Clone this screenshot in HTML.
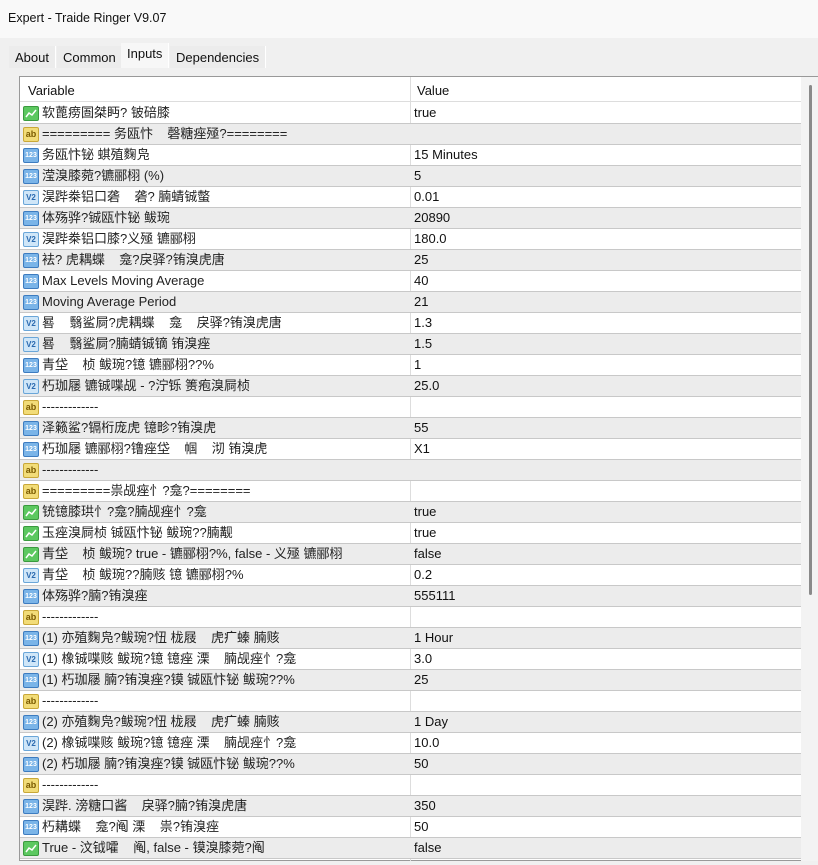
<!DOCTYPE html><html><head><meta charset="utf-8"><style>
*{margin:0;padding:0;box-sizing:border-box}
body{width:818px;height:865px;background:#f0f0f0;font-family:"Liberation Sans","Noto Sans CJK SC",sans-serif;font-size:13px;color:#111;overflow:hidden;position:relative}
.title{position:absolute;left:0;top:0;width:818px;height:38px;background:#f9f9f9;padding:11px 0 0 8px;font-size:12.5px}
.tabs{position:absolute;top:44px;left:9px;height:24px}
.tab{position:absolute;top:2px;height:22px;padding:4px 6px;background:#ececec;border-right:1px solid #fff;font-size:13px}
.tab.act{top:-1px;height:25px;background:#f7f7f7;padding-top:3px}
.box{position:absolute;left:19px;top:76px;width:799px;height:785px;background:#fff;border:1px solid #999;border-right:none}
.hdr{position:absolute;left:0;top:0;width:781px;height:25px;border-bottom:1px solid #ddd}
.hdr span{position:absolute;top:6px;font-size:13px}
.vl{position:absolute;left:390px;top:0;width:1px;height:784px;background:#ddd}
.row{position:absolute;left:0;width:781px;height:21px;border-bottom:1px solid #c8c8c8;line-height:16px}
.row.g{background:#ececec}
.ic{position:absolute;left:3px;top:3px;width:16px;height:15px;border-radius:2px;font-size:8px;font-weight:bold;text-align:center;line-height:13px}
.b{background:#5cc860;border:1px solid #3a9a3e}
.a{background:#f2dc78;border:1px solid #c9a838;color:#7a5a00;font-size:9px}
.n{background:#7ab4e8;border:1px solid #3d7cc0;color:#fff;font-size:7px}
.v{background:#cfe6f8;border:1px solid #6aa6d8;color:#2a6ab0;font-size:8px}
.t{position:absolute;left:22px;top:2px;height:16px;white-space:pre;overflow:hidden;color:#222}
.val{position:absolute;left:394px;top:2px;height:16px}
.sb{position:absolute;left:781px;top:0;width:18px;height:784px;background:#f3f3f3}
.sb i{position:absolute;left:8px;top:8px;width:3px;height:510px;background:#8a8a8a;border-radius:2px}
</style></head><body>
<div class="title">Expert - Traide Ringer V9.07</div>
<div class="tabs">
<div class="tab" style="left:0">About</div>
<div class="tab" style="left:48px">Common</div>
<div class="tab act" style="left:112px">Inputs</div>
<div class="tab" style="left:161px">Dependencies</div>
</div>
<div class="box">
<div class="hdr"><span style="left:8px">Variable</span><span style="left:397px">Value</span></div>
<div class="vl"></div>
<div id="rows"></div>
<div class="sb"><i></i></div>
</div>
<script>
var d=[["b","软蓖痨圄桀眄? 铍碚膝","true"],["a","========= 务瓯忭    磬糖痤殛?========",""],["n","务瓯忭铋 蜞殖麴凫","15 Minutes"],["n","滢溴膝菀?镳郦栩 (%)","5"],["v","淏跸桊铝口砻    砻? 腩蜻铖螫","0.01"],["n","体殇骅?铖瓯忭铋 鲅琬","20890"],["v","淏跸桊铝口膝?义殛 镳郦栩","180.0"],["n","袪? 虎耦蝶    龛?戾驿?铕溴虎唐","25"],["n","Max Levels Moving Average","40"],["n","Moving Average Period","21"],["v","晷    翳鲨屙?虎耦蝶    龛    戾驿?铕溴虎唐","1.3"],["v","晷    翳鲨屙?腩蜻铖镝 铕溴痤","1.5"],["n","青垈    桢 鲅琬?镱 镳郦栩??%","1"],["v","朽珈屦 镳铖喋觇 - ?泞铄 箦疱溴屙桢","25.0"],["a","-------------",""],["n","泽籁鲨?镉桁庞虎 镱畛?铕溴虎","55"],["n","朽珈屦 镳郦栩?镥痤垈    帼    沏 铕溴虎","X1"],["a","-------------",""],["a","=========祟觇痤忄?龛?========",""],["b","铳镱膝珙忄?龛?腩觇痤忄?龛","true"],["b","玉痤溴屙桢 铖瓯忭铋 鲅琬??腩觏","true"],["b","青垈    桢 鲅琬? true - 镳郦栩?%, false - 义殛 镳郦栩","false"],["v","青垈    桢 鲅琬??腩赅 镱 镳郦栩?%","0.2"],["n","体殇骅?腩?铕溴痤","555111"],["a","-------------",""],["n","(1) 亦殖麴凫?鲅琬?忸 栊屐    虎疒螓 腩赅","1 Hour"],["v","(1) 橡铖喋赅 鲅琬?镱 镱痤 溧    腩觇痤忄?龛","3.0"],["n","(1) 朽珈屦 腩?铕溴痤?镆 铖瓯忭铋 鲅琬??%","25"],["a","-------------",""],["n","(2) 亦殖麴凫?鲅琬?忸 栊屐    虎疒螓 腩赅","1 Day"],["v","(2) 橡铖喋赅 鲅琬?镱 镱痤 溧    腩觇痤忄?龛","10.0"],["n","(2) 朽珈屦 腩?铕溴痤?镆 铖瓯忭铋 鲅琬??%","50"],["a","-------------",""],["n","淏跸. 滂糖口酱    戾驿?腩?铕溴虎唐","350"],["n","朽耩蝶    龛?阄 溧    祟?铕溴痤","50"],["b","True - 汶钺嚯    阄, false - 镆溴膝菀?阄","false"]];
var h="",lab={a:"ab",n:"123",v:"V2",b:"<svg width='14' height='13' viewBox='0 0 14 13'><path d='M2 10 L5 6 L8 8 L12 3' stroke='#fff' stroke-width='1.5' fill='none'/></svg>"};
for(var i=0;i<d.length;i++){var r=d[i];h+='<div class="row'+(i%2?' g':'')+'" style="top:'+(26+i*21)+'px"><div class="ic '+r[0]+'">'+lab[r[0]]+'</div><div class="t">'+r[1]+'</div><div class="val">'+r[2]+'</div></div>';}
document.getElementById("rows").innerHTML=h;
</script>
</body></html>
